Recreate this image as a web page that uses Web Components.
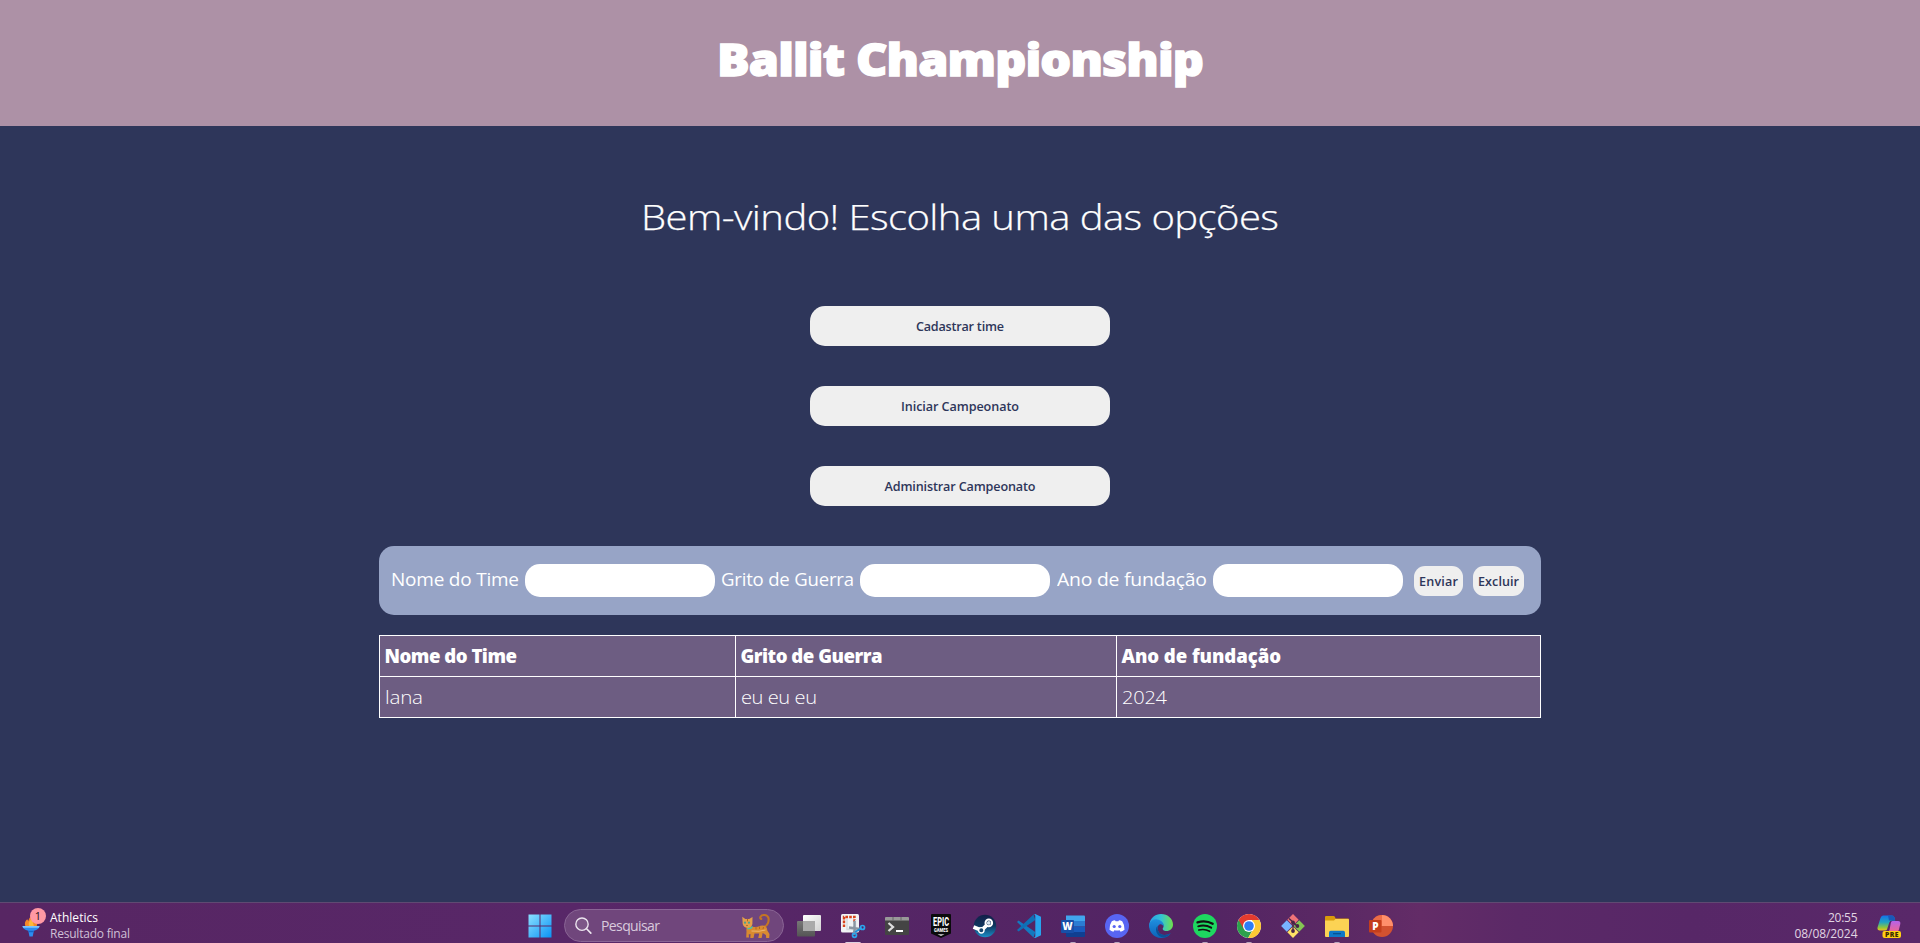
<!DOCTYPE html>
<html lang="pt-BR">
<head>
<meta charset="utf-8">
<title>Ballit Championship</title>
<style>
html,body{margin:0;height:100%;overflow:hidden;background:#2e365a}
body{font-family:"Open Sans","Noto Sans",sans-serif;color:#fff}
</style>
</head>
<body>
<ballit-app></ballit-app>
<script>
const define=(name,html,setup)=>customElements.define(name,class extends HTMLElement{
  connectedCallback(){
    if(this.shadowRoot)return;
    const t=document.createElement('template');t.innerHTML=html;
    this.attachShadow({mode:'open'}).append(t.content.cloneNode(true));
    if(setup)setup(this,this.shadowRoot);
  }
});

// Text that fills the width given in pixels: widened glyphs when "track" (fixed letter-spacing) is set, else tracked.
define('fit-text',`<style>:host{display:inline-block;white-space:nowrap}span{display:inline-block;transform-origin:0 50%}</style><span><slot></slot></span>`,(el,root)=>{
  const w=+el.getAttribute('w'),s=root.querySelector('span'),n=el.textContent.length;
  if(el.hasAttribute('track')){
    const t=+el.getAttribute('track');
    s.style.letterSpacing=t+'px';
    const k=w/(s.getBoundingClientRect().width-t);
    s.style.transform=`scaleX(${k})`;el.style.width=w+'px';
    return;
  }
  const sp=(w-s.getBoundingClientRect().width)/(n-1);
  s.style.letterSpacing=sp+'px';s.style.marginRight=-sp+'px';
});

define('app-header',`<style>
:host{display:flex;height:126px;background:#ad91a6;justify-content:center;box-sizing:border-box;padding-top:19px}
h1{margin:0;font-size:45px;font-weight:800;line-height:80px;-webkit-text-stroke:1.4px #fff}
</style><h1><slot></slot></h1>`);

define('menu-button',`<style>
:host{display:block}
button{display:block;width:300px;height:40px;border:0;border-radius:15px;background:#efefef;color:#2e365a;font:600 12.6px/39px "Open Sans",sans-serif;padding:1px 0 0;text-align:center}
</style><button><slot></slot></button>`);

define('small-button',`<style>
:host{display:block}
button{display:block;width:100%;height:30px;border:0;border-radius:11px;background:#efefef;color:#2e365a;font:600 12.6px/29px "Open Sans",sans-serif;padding:1px 0 0;text-align:center}
</style><button><slot></slot></button>`);

define('team-form',`<style>
:host{display:flex;align-items:center;width:1162px;height:69px;box-sizing:border-box;padding-left:12px;border-radius:15px;background:#97a4c6;font-size:18.6px}
label{line-height:26px;padding-bottom:4px}
input{box-sizing:border-box;width:190px;height:33px;border:0;border-radius:15px;background:#fff;margin:0 6px;padding:0 10px}
input+label+input+label{margin-left:1px}
small-button{margin-top:1px}
.a{width:49px;margin-left:5px}.b{width:51px;margin-left:10px}
</style>
<label><fit-text w="128" track="-.2">Nome do Time</fit-text></label><input aria-label="Nome"><label><fit-text w="133" track="-.2">Grito de Guerra</fit-text></label><input aria-label="Grito"><label><fit-text w="150" track="-.2">Ano de fundação</fit-text></label><input aria-label="Ano">
<small-button class="a"><fit-text w="39">Enviar</fit-text></small-button><small-button class="b"><fit-text w="41">Excluir</fit-text></small-button>`);

define('team-table',`<style>
:host{display:grid;grid-template-columns:355px 380px 423px;grid-template-rows:40px 40px;gap:1px;padding:1px;background:#fff;width:1160px;font-size:18.6px;font-weight:300}
div{background:#6d5d82;padding-left:4.500px;line-height:40px}
.h{font-weight:800}
</style>
<div class="h"><fit-text w="132.500">Nome do Time</fit-text></div><div class="h"><fit-text w="142">Grito de Guerra</fit-text></div><div class="h"><fit-text w="159.500">Ano de fundação</fit-text></div>
<div><fit-text w="38" track="-.2">lana</fit-text></div><div><fit-text w="76" track="-.4">eu eu eu</fit-text></div><div><fit-text w="45" track="-.2">2024</fit-text></div>`);

const icons={
win:`<defs><linearGradient id="g" x1="0" y1="0" x2="1" y2="1"><stop offset="0" stop-color="#8be0ff"/><stop offset="1" stop-color="#0a93f5"/></linearGradient></defs><path fill="url(#g)" d="M.5.5h11v11h-11zM12.500.5h11v11h-11zM.5 12.500h11v11h-11zM12.500 12.500h11v11h-11z"/>`,
task:`<defs><linearGradient id="g" x2="1" y2="1"><stop stop-color="#fff"/><stop offset="1" stop-color="#d2d2d2"/></linearGradient><linearGradient id="h" y2="1" x2="0"><stop stop-color="#777"/><stop offset="1" stop-color="#555"/></linearGradient></defs><rect x="6" y="1" width="18" height="16" rx="1" fill="url(#g)"/><rect y="7" width="18" height="15.500" rx="1" fill="url(#h)"/><path d="M6 7h12v10H6z" fill="#aaa"/>`,
snip:`<rect width="18" height="18.500" rx="1.500" fill="#f1f3f5"/><path d="M3 13V3h10.500v5" fill="none" stroke="#d8431c" stroke-width="2.400" stroke-dasharray="2.600 1.200"/><path d="M6 5v10.500l7 0M14.500 6v11" stroke="#d4d9df" stroke-width="1.400" fill="none"/><path d="M8 13.500l11 1.500M13.500 7v9l-1 5" stroke="#8b96a3" stroke-width="2.400" fill="none"/><path d="M14 18l7-4" stroke="#1b8fd8" stroke-width="2"/><circle cx="21.500" cy="13.500" r="2" fill="none" stroke="#2ba4ec" stroke-width="1.700"/><circle cx="13.500" cy="21.300" r="2" fill="none" stroke="#2ba4ec" stroke-width="1.700"/>`,
term:`<rect y="3" width="24" height="18" rx="1" fill="#444"/><path d="M0 6.500V4q0-1 1-1h22q1 0 1 1v2.500z" fill="#999"/><path d="M8 3v3.500M16 3v3.500" stroke="#666"/><path d="M3.500 9l4.500 4-4.500 4" stroke="#ddd" stroke-width="2.300" fill="none"/><path d="M11 17h7" stroke="#fff" stroke-width="2"/>`,
epic:`<path d="M3 0h18q1 0 1 1v18.500L12 24 2 19.500V1q0-1 1-1z" fill="#0b0b0d"/><text x="12" y="12" text-anchor="middle" font-family="Roboto" font-weight="800" font-size="12" textLength="16" lengthAdjust="spacingAndGlyphs" fill="#fff">EPIC</text><text x="12" y="17.500" text-anchor="middle" font-family="Roboto" font-weight="800" font-size="4.600" textLength="14" lengthAdjust="spacingAndGlyphs" fill="#fff">GAMES</text><path d="M8.500 20.200h7L12 22z" fill="#ddd"/>`,
steam:`<defs><linearGradient id="g" x2="0" y2="1"><stop stop-color="#122049"/><stop offset=".5" stop-color="#10365f"/><stop offset="1" stop-color="#1b8fc8"/></linearGradient></defs><circle cx="12" cy="12" r="11.200" fill="url(#g)"/><path d="M.5 13l8 3.300 7-6.800" stroke="#fff" stroke-width="3.800" fill="none"/><circle cx="15.800" cy="8.900" r="3.300" fill="#12305a" stroke="#fff" stroke-width="2"/><circle cx="15.800" cy="8.900" r="1.900" fill="#dce8f2"/><circle cx="8.300" cy="16.300" r="2.700" fill="#15456f" stroke="#fff" stroke-width="1.400"/>`,
code:`<path d="M1.500 6.500L0 8l16.500 15.500L18.300 18z" fill="#1379c0"/><path d="M0 16l1.500 1.500L18.300 6 16.500.5z" fill="#0f6fb5"/><path d="M16.500.4Q17 0 18.300 0L24 2.700v18.600L18.300 24q-1.300 0-1.800-.5 1.800.5 1.800-1.500V2Q18.300 0 16.500.4z" fill="#27a4ee"/>`,
word:`<path d="M5 1.500h18q1 0 1 1V7H5z" fill="#41a5ee"/><path d="M5 7h19v5.500H5z" fill="#2b7cd3"/><path d="M5 12.500h19V18H5z" fill="#185abd"/><path d="M5 18h19v4q0 1-1 1H6q-1 0-1-1z" fill="#103f91"/><rect y="6" width="13" height="13" rx="1" fill="#174fa8"/><text x="6.500" y="16.300" text-anchor="middle" font-family="Open Sans" font-weight="800" font-size="10" fill="#fff">W</text>`,
discord:`<circle cx="12" cy="12" r="12" fill="#5865f2"/><path d="M6.800 7.300Q8.500 6.400 10 6.200l.6 1.100h2.800L14 6.200q1.500.2 3.200 1.100 2.700 4 2.300 8.500-1.800 1.400-3.900 1.900l-1-1.500q-2.600.6-5.200 0l-1 1.500q-2.100-.5-3.900-1.900-.4-4.500 2.300-8.500z" fill="#fff"/><circle cx="9.200" cy="12.500" r="1.600" fill="#5865f2"/><circle cx="14.800" cy="12.500" r="1.600" fill="#5865f2"/>`,
edge:`<defs><linearGradient id="g"><stop stop-color="#2a9fe6"/><stop offset=".5" stop-color="#33c3d5"/><stop offset="1" stop-color="#70e04b"/></linearGradient><linearGradient id="h" x2="0" y2="1"><stop stop-color="#1f8fdf"/><stop offset="1" stop-color="#0c62b8"/></linearGradient></defs><path d="M.2 10.500C1.300 4 6.200 0 12 0c7 0 12 5 12 10.500 0 4-3 6.500-6.500 6.500-3 0-4.500-1.500-3.500-3 1.800-3-.5-5.800-4-5.800-4.500 0-7 3-7 8C1 15 0 13 .2 10.500z" fill="url(#g)"/><path d="M.2 10.300C1.500 6.500 5 5 8 5.400c5 .4 7.500 4.300 6.500 7.300-.4-1.800-2-2.700-3.300-2.400-2.200.4-3.200 3.500-2 6.700 1.500 4 7 5.300 12.500 2.200C19.500 22.500 16 24 12 24 4.500 24-.5 17.500.2 10.300z" fill="url(#h)"/><path d="M8.700 11.800c-4 3.700-.5 11.700 6.300 11.700 2.700-.5 5.200-2.200 6.700-4.300-5.500 3.100-11 1.800-12.500-2.200-.8-2-.9-3.700-.5-5.200z" fill="#0c4f96"/>`,
spotify:`<circle cx="12" cy="12" r="12" fill="#1ed760"/><g fill="none" stroke="#111" stroke-linecap="round"><path d="M4.500 8.300c5-1.500 11-1 15.200 1.400" stroke-width="2.300"/><path d="M5.200 12.300c4.500-1.300 9.300-.7 13 1.400" stroke-width="1.900"/><path d="M5.800 16c4-1 7.700-.5 10.800 1.300" stroke-width="1.600"/></g>`,
chrome:`<circle cx="12" cy="12" r="12" fill="#fff"/><path d="M1.600 6a12 12 0 0 0 9.500 18l5-8.800L12 12z" fill="#2da14c"/><path d="M22.400 6a12 12 0 0 1-11.300 18L16.800 14.600 15 6z" fill="#fcc934"/><path d="M1.600 6A12 12 0 0 1 22.400 6H12L6.800 15z" fill="#e33b2e"/><circle cx="12" cy="12" r="6" fill="#fff"/><circle cx="12" cy="12" r="4.800" fill="#2d7df6"/>`,
git:`<g transform="rotate(45 12 12)"><path d="M3.600 3.600h8v8h-8z" fill="#f07478"/><path d="M12.400 3.600h8v8h-8z" fill="#84c553"/><path d="M3.600 12.400h8v8h-8z" fill="#78b4ff"/><path d="M12.400 12.400h8v8h-8z" fill="#ffe266"/></g><path d="M8 4.500L12 8v10M12 8.500l4 3.500" stroke="#452447" stroke-width="1.300" fill="none"/><circle cx="12" cy="8.500" r="1.900" fill="#452447"/><circle cx="12" cy="17" r="1.900" fill="#452447"/><circle cx="16.400" cy="12" r="1.900" fill="#452447"/>`,
folder:`<path d="M0 3q0-1 1-1h7.500q1 0 1.500 1l.5 1.500H23q1 0 1 1V10H0z" fill="#d99a0b"/><path d="M0 6.500h9l1.500-1.500H23q1 0 1 1V22q0 1-1 1H1q-1 0-1-1z" fill="#fcd354"/><path d="M4 23v-4.500q0-1.700 1.700-1.700h12.600q1.700 0 1.700 1.700V23z" fill="#0f78c8"/><path d="M8 19.700h8" stroke="#07508c" stroke-width="1.200"/>`,
ppt:`<circle cx="13" cy="12" r="11" fill="#d35230"/><path d="M13 1a11 11 0 0 1 11 11H13z" fill="#ff8f6b"/><path d="M2 12A11 11 0 0 1 13 1v11z" fill="#ed6c47"/><rect y="6" width="12.500" height="12.500" rx="1" fill="#c43e1c"/><text x="6.300" y="16" text-anchor="middle" font-family="Open Sans" font-weight="800" font-size="10" fill="#fff">P</text>`,
copilot:`<defs><linearGradient id="g" x2="0" y2="1"><stop stop-color="#1472e8"/><stop offset=".45" stop-color="#1fa3c4"/><stop offset=".8" stop-color="#8fc53e"/><stop offset="1" stop-color="#f3c11c"/></linearGradient><linearGradient id="h" x2="0" y2="1"><stop stop-color="#b662ea"/><stop offset="1" stop-color="#f0668e"/></linearGradient></defs><path d="M6 1.500h9q2 0 2.500 2l.7 3H15q-2 0-2.700 2L10 15.500q-.5 1-2 1H3q-3 0-2.500-3L3.500 4Q4.300 1.500 6 1.500z" fill="url(#g)"/><path d="M11 1.500h4q2 0 2.500 2l.7 3H12z" fill="#1959b8"/><path d="M15.500 7H21q2.800 0 2.300 3l-1.500 6q-.7 2-2.500 2H10q2 0 2.500-2l1.300-7q.4-2 1.700-2z" fill="url(#h)"/><rect x="5.500" y="17" width="18.500" height="7" rx="2" fill="#ffd014"/><text x="14.800" y="22.900" text-anchor="middle" font-family="Open Sans" font-weight="800" font-size="6.800" textLength="13.500" lengthAdjust="spacing" fill="#3a2a00">PRE</text>`,
torch:`<path d="M4 13Q2.500 9 6 6q1 1 1 2 1-4 5-6.500 0 3 2 4.500 4 3 2 7z" fill="#f58a28"/><path d="M8 13Q6.500 10 10 6q3 3 3 7z" fill="#fcb83a"/><path d="M1 13h18q-.5 4-6 5l-1.200 6H8.400L7.200 18Q1.500 17 1 13z" fill="#2d8cf0"/><path d="M1 13h18l-.7 1.800H1.700z" fill="#7cc4ff"/><path d="M7.200 18h5.800l-.3 1.500H7.500z" fill="#1565c8"/>`,
cat:`<path d="M22.500 13.500C27 11.500 28.300 7 27.300 3.500 26 .3 21 .2 19.500 2.700q-.8 1.800.8 2.300" fill="none" stroke="#c47522" stroke-width="2.100" stroke-linecap="round"/><path d="M8.500 12q6 2 11-.3 6.500-1.200 6.800 4.800l2.200 3.500-.3 4h-3l-.3-3-3.200-2-1.100 5h-3.300l.9-4.500h-4.700L12.500 24H9.300l.2-4-1.800.5L8 23.500H5.200l.3-6.500Q5 15 6 13z" fill="#d98a30"/><path d="M1.300 2.700l3 2.300h3.900l3.300-2-.1 7q-.8 3.700-4.800 3.900Q2.500 13.500 1.700 10z" fill="#e5a04a"/><path d="M10.500 17q8 1 14-1" stroke="#eeb76d" stroke-width="1" fill="none"/><path d="M15 13v2.500M18.500 12.500v2.500M22.500 13l-.5 2M6.500 4.800v2.500" stroke="#b4671d" stroke-width="1"/><circle cx="4" cy="8.700" r="1.100" fill="#4d9f90"/><circle cx="8" cy="8.700" r="1.100" fill="#4d9f90"/><path d="M6.500 14.500q3.500.7 5-2" stroke="#39c8b5" stroke-width="1.400" fill="none"/><path d="M5 11.200h2l-1 1z" fill="#784019"/>`,
search:`<circle cx="10" cy="10" r="6.700" fill="#ffffff18" stroke="#ece5ef" stroke-width="1.500"/><path d="M15 15l4.600 4.800" stroke="#ece5ef" stroke-width="1.800" stroke-linecap="round"/>`
};

// One taskbar glyph; "run" draws the marker of an open window.
define('task-icon',`<style>
:host{display:grid;place-items:center;position:relative;flex:none;width:44px;height:48px}
svg{display:block;width:24px;height:24px;overflow:visible}
:host([run])::after{content:"";position:absolute;left:19px;top:39.500px;width:6px;height:3px;border-radius:2px;background:#b9a7bf}
:host([run=wide])::after{left:14px;width:16px;background:#ddd0e0}
</style><svg></svg>`,(el,root)=>{
  const s=root.querySelector('svg');
  s.setAttribute('viewBox',`0 0 ${el.getAttribute('vw')||24} 24`);
  s.style.width=(el.getAttribute('vw')||24)+'px';
  s.innerHTML=icons[el.getAttribute('name')];
});

define('news-widget',`<style>
:host{display:flex;width:505px;font-size:12px}
.i{position:relative;margin-left:21px;width:29px}
task-icon{width:20px;height:48px;margin-top:-1px}
task-icon{transform:scale(.95)}
b{position:absolute;left:9px;top:6px;width:16px;height:16px;border-radius:50%;background:#ff99a4;color:#23121a;font-weight:400;font-size:11px;line-height:16px;text-align:center}
.t{padding-top:8px;line-height:16px;color:#d0c0d6}.t :first-child{color:#fff}
.t fit-text{display:block}
</style><div class="i"><task-icon name="torch" vw="20"></task-icon><b>1</b></div><div class="t"><fit-text w="48">Athletics</fit-text><fit-text w="80">Resultado final</fit-text></div>`);

define('search-box',`<style>
:host{display:flex;align-items:center;box-sizing:border-box;width:220px;height:33px;margin-top:7px;margin-left:2px;border-radius:17px;background:#70467c;border:1px solid #8a6595;font-size:14px;color:#d9cadd}
.s{width:20px;margin-left:7px;height:32px}
fit-text{margin-left:9px;line-height:30px}
.c{margin-left:81px;width:30px;height:30px}
</style><task-icon class="s" name="search" vw="22" style="transform:scale(.92)"></task-icon><fit-text w="59">Pesquisar</fit-text><task-icon class="c" name="cat" vw="30"></task-icon>`);

define('task-clock',`<style>
:host{display:block;text-align:right;font-size:12px;line-height:16px;padding-top:8px;color:#e0d5e3}
div{line-height:16px;height:16px}
</style><div><fit-text w="29.500">20:55</fit-text></div><div><fit-text w="63">08/08/2024</fit-text></div>`);

define('task-bar',`<style>
:host{display:block;height:41px;overflow:hidden;box-sizing:border-box;border-top:1px solid #5f4a72;background:linear-gradient(90deg,#572663,#582768 30%,#522463 62%,#5b2964 70%,#632c67 74%,#5b2967 79%,#572767 88%,#592869)}
.r{display:flex;height:48px;width:1920px;margin-top:-1px}
.w{margin-left:13px;width:44px}.g{display:flex;margin-left:2.500px}
task-clock{margin-left:auto;margin-right:16px}
.p{margin-right:16.500px}
</style><div class="r"><news-widget></news-widget><task-icon class="w" name="win"></task-icon><search-box class="q"></search-box><div class="g">
<task-icon name="task"></task-icon><task-icon name="snip" run="wide"></task-icon><task-icon name="term"></task-icon><task-icon name="epic"></task-icon><task-icon name="steam"></task-icon><task-icon name="code"></task-icon><task-icon name="word" run></task-icon><task-icon name="discord" run></task-icon><task-icon name="edge"></task-icon><task-icon name="spotify" run></task-icon><task-icon name="chrome" run></task-icon><task-icon name="git"></task-icon><task-icon name="folder" run></task-icon><task-icon name="ppt"></task-icon></div>
<task-clock></task-clock><task-icon class="p" name="copilot" style="width:30px"></task-icon></div>`);

define('ballit-app',`<style>
:host{display:flex;flex-direction:column;height:943px}
main{flex:1;display:flex;flex-direction:column;align-items:center}
h2{margin:0;font-size:35.500px;font-weight:300;line-height:181px;height:180px;-webkit-text-stroke:.25px #fff}
.m{display:grid;gap:40px;margin-bottom:40px}
team-form{margin-bottom:20px}
</style>
<app-header><fit-text w="487" track="-.8">Ballit Championship</fit-text></app-header>
<main><h2><fit-text w="638" track="-.5">Bem-vindo! Escolha uma das opções</fit-text></h2>
<div class="m"><menu-button><fit-text w="88">Cadastrar time</fit-text></menu-button><menu-button><fit-text w="118">Iniciar Campeonato</fit-text></menu-button><menu-button><fit-text w="151">Administrar Campeonato</fit-text></menu-button></div>
<team-form></team-form><team-table></team-table></main>
<task-bar></task-bar>`);
</script>
</body>
</html>
